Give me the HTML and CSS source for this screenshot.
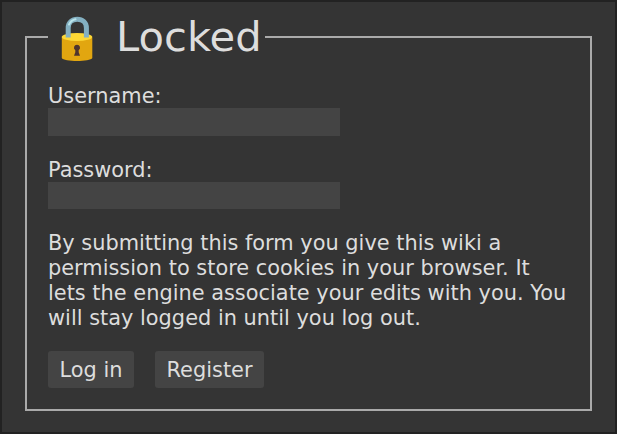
FILE: index.html
```html
<!DOCTYPE html>
<html lang="en">
<head>
<meta charset="utf-8">
<title>Locked</title>
<link rel="stylesheet" href="styles.css">
</head>
<body>
<main class="page">
<form class="login">
<fieldset class="box">
<legend class="title"><svg class="lock" viewBox="0 0 32 49" aria-hidden="true">
<path d="M.8 25.500V46C2.500 50 29.500 50 31.300 46V25.500z" fill="#e2a610"/>
<ellipse cx="16" cy="25" rx="15.300" ry="4" fill="#fdd835"/>
<path d="M7.200 25.500V16C7.200 10.500 11 7.300 16.300 7.300S25.400 10.500 25.400 16V25.500" fill="none" stroke="#84b0c1" stroke-width="5"/>
<path d="M8 12.500C9.500 9.500 11.500 7.800 14.500 7.300" fill="none" stroke="#b9e4ea" stroke-width="2" stroke-linecap="round"/>
<path d="M16 32.700a3 3 0 0 0-1.700 5.500v2L13 43.800h6L17.700 40.200v-2A3 3 0 0 0 16 32.700z" fill="#4e342e"/>
</svg>Locked</legend>
<label class="label" for="username">Username:</label>
<input class="field" id="username" type="text">
<label class="label" for="password">Password:</label>
<input class="field field-short" id="password" type="password">
<p class="notice">By submitting this form you give this wiki a permission to store cookies in your browser. It lets the engine associate your edits with you. You will stay logged in until you log out.</p>
<div class="actions"><button class="btn" type="button">Log in</button><button class="btn" type="button">Register</button></div>
</fieldset>
</form>
</main>
</body>
</html>
```
FILE: styles.css
```css
* { box-sizing: border-box; }
body { margin: 0; background: #343434; color: #ddd; font: 20.9px/25px "DejaVu Sans", sans-serif; }
.page { height: 434px; border: 2px solid #222; padding: 10px 23px 21px; }
.login { margin: 0; }
.box { margin: 0; height: 399px; padding: 0 21px; border: 2px solid #aaa; min-width: 0; }
.title { display: flex; align-items: center; height: 49px; padding: 0 3px 0 13px; font-size: 41.7px; line-height: 49px; }
.lock { width: 32px; height: 49px; margin-right: 23px; }
.label { display: block; height: 25px; margin-top: 21px; line-height: 27px; }
.title + .label { margin-top: 22px; }
.field { display: block; width: 292px; height: 28px; border: 0; background: #444; color: #ddd; font: inherit; padding: 0 6px; }
.field-short { height: 27px; }
.notice { margin: 22px 0 20px; }
.actions { display: flex; gap: 21px; }
.btn { height: 37px; border: 0; border-radius: 3px; padding: 2px 11.5px 0; background: #444; color: #ddd; font: inherit; }
```
